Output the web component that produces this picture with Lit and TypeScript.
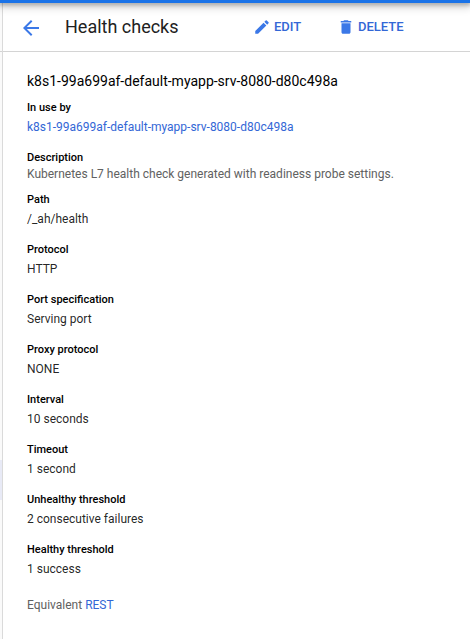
import { LitElement, html, css } from "lit";
import { customElement, property } from "lit/decorators.js";

@customElement("detail-field")
class DetailField extends LitElement {
  @property() label = "";

  static styles = css`
    :host { display: block; margin-bottom: 10px; }
    .label {
      height: 20px;
      font-size: 11px;
      line-height: 22px;
      font-weight: 500;
      color: #000000;
    }
    .value { height: 20px; line-height: 20px; color: rgba(0, 0, 0, 0.87); white-space: nowrap; }
    :host([compact]) { margin-bottom: 8px; }
    :host([compact]) .value { height: 14px; line-height: 14px; color: #616161; }
  `;

  render() {
    return html`<div class="label">${this.label}</div><div class="value"><slot></slot></div>`;
  }
}

const fields: [string, string][] = [
  ["Path", "/_ah/health"],
  ["Protocol", "HTTP"],
  ["Port specification", "Serving port"],
  ["Proxy protocol", "NONE"],
  ["Interval", "10 seconds"],
  ["Timeout", "1 second"],
  ["Unhealthy threshold", "2 consecutive failures"],
  ["Healthy threshold", "1 success"],
];

@customElement("app-root")
class AppRoot extends LitElement {
  static styles = css`
    :host {
      display: flex;
      flex-direction: column;
      height: 639px;
      overflow: hidden;
      background: #fff;
      font: 12px Roboto, sans-serif;
    }
    .topbar {
      height: 3px;
      flex: none;
      background: #1a73e8;
      box-shadow: 0 1px 4px 1px rgba(0, 0, 0, 0.3), 0 3px 9px 1px rgba(0, 0, 0, 0.22);
      z-index: 1;
    }
    .shell { display: flex; flex: 1; min-height: 0; }
    .rail { width: 2px; flex: none; background: #fafafa; border-right: 1px solid #dadada; box-sizing: content-box; }
    .rail::before { content: ""; display: block; height: 48px; border-bottom: 1px solid #d4d4d4; }
    .rail::after { content: ""; display: block; height: 40px; margin-top: 408px; background: #e8eaf6; }
    .panel { flex: 1; min-width: 0; }
    header {
      display: flex;
      align-items: center;
      height: 48px;
      padding-left: 16px;
      border-bottom: 1px solid #d4d4d4;
      color: #3367d6;
    }
    svg { display: block; fill: #3b78e7; flex: none; }
    .back { width: 24px; height: 24px; margin-top: 2px; }
    h1 { margin: 0; padding: 0 0 2px 22px; width: 188px; font-size: 18px; font-weight: 400; color: #212121; white-space: nowrap; }
    .action { display: flex; align-items: center; font-size: 13px; font-weight: 500; line-height: 20px; }
    .action svg { width: 18px; height: 18px; margin-right: 3px; }
    .edit { width: 84px; }
    main { padding: 19px 24px 0; }
    h2 { margin: 0 0 6px; font-size: 14px; line-height: 20px; font-weight: 400; color: #000; white-space: nowrap; }
    a { color: #3367d6; text-decoration: none; }
    .equivalent { margin-top: 16px; line-height: 20px; color: #616161; }
  `;

  render() {
    return html`
      <div class="topbar"></div>
      <div class="shell">
        <div class="rail"></div>
        <div class="panel">
          <header>
            <svg class="back" viewBox="0 0 24 24"><path d="M20 11H7.8l5.6-5.6L12 4l-8 8 8 8 1.4-1.4L7.8 13H20z" /></svg>
            <h1>Health checks</h1>
            <div class="action edit">
              <svg viewBox="0 0 24 24"><path d="M3 17.25V21h3.75L17.81 9.94l-3.75-3.75L3 17.25zM20.71 7.04a1 1 0 0 0 0-1.41l-2.34-2.34a1 1 0 0 0-1.41 0l-1.83 1.83 3.75 3.75 1.83-1.83z" /></svg>
              EDIT
            </div>
            <div class="action">
              <svg viewBox="0 0 24 24"><path d="M6 19c0 1.1.9 2 2 2h8c1.1 0 2-.9 2-2V7H6v12zM19 4h-3.5l-1-1h-5l-1 1H5v2h14V4z" /></svg>
              DELETE
            </div>
          </header>
          <main>
            <h2>k8s1-99a699af-default-myapp-srv-8080-d80c498a</h2>
            <detail-field label="In use by"><a>k8s1-99a699af-default-myapp-srv-8080-d80c498a</a></detail-field>
            <detail-field compact label="Description">Kubernetes L7 health check generated with readiness probe settings.</detail-field>
            ${fields.map(([label, value]) => html`<detail-field label=${label}>${value}</detail-field>`)}
            <div class="equivalent">Equivalent <a>REST</a></div>
          </main>
        </div>
      </div>
    `;
  }
}
